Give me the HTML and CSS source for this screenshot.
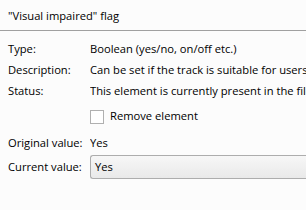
FILE: index.html
```html
<!DOCTYPE html>
<html>
<head>
<meta charset="utf-8">
<link rel="stylesheet" href="styles.css">
</head>
<body>
<div class="page">
  <div class="title">"Visual impaired" flag</div>
  <div class="sep"></div>
  <div class="grid">
    <div class="lbl">Type:</div><div class="val">Boolean (yes/no, on/off etc.)</div>
    <div class="lbl">Description:</div><div class="val">Can be set if the track is suitable for users with visual impairments.</div>
    <div class="lbl">Status:</div><div class="val">This element is currently present in the file.</div>
    <div class="lbl"></div><div class="val check-row"><span class="box"></span><span>Remove element</span></div>
    <div class="lbl">Original value:</div><div class="val">Yes</div>
    <div class="lbl combo-lbl">Current value:</div><div class="val"><div class="combo">Yes</div></div>
  </div>
</div>
</body>
</html>
```
FILE: styles.css
```css
html, body {
  margin: 0;
  padding: 0;
  background: #fcfcfc;
  overflow: hidden;
}
.page {
  width: 306px;
  height: 210px;
  font-family: "Open Sans", "Noto Sans", sans-serif;
  font-size: 11.2px;
  color: #000;
  white-space: nowrap;
}
.title {
  padding: 8px 0 0 8px;
  height: 16px;
  line-height: 16px;
}
.sep {
  margin-top: 6px;
  height: 1px;
  background: #a0a0a0;
}
.grid {
  display: grid;
  grid-template-columns: 82px 1fr;
  grid-template-rows: 21px 21px 21px 31px 21px 26px;
  padding-left: 8px;
  padding-top: 7px;
  line-height: 21px;
}
.val {
  overflow: hidden;
}
.check-row {
  display: flex;
  align-items: flex-start;
  gap: 6px;
  line-height: 16px;
}
.box {
  width: 12px;
  height: 12px;
  margin-top: 9px;
  border: 1px solid #b0b0b0;
  background: #fff;
  flex: none;
}
.check-row span:last-child {
  margin-top: 7px;
}
.combo-lbl {
  padding-top: 3px;
}
.combo {
  height: 22px;
  line-height: 22px;
  margin-top: 2px;
  border: 1px solid #adadad;
  border-right: none;
  border-radius: 3px 0 0 3px;
  background: linear-gradient(#f7f7f7, #e9e9e9);
  padding-left: 4px;
}
```
